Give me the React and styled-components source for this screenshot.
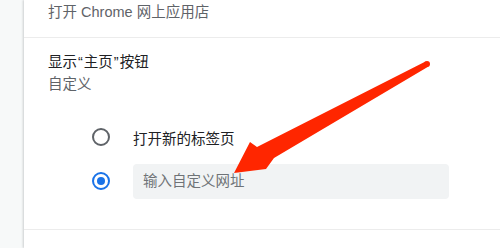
import React from "react";
import styled, { createGlobalStyle } from "styled-components";

const GlobalStyle = createGlobalStyle`
  html, body {
    margin: 0;
    padding: 0;
    background: #f7f9f9;
  }
  body {
    font-family: "Liberation Sans", "Noto Sans CJK SC", sans-serif;
    -webkit-font-smoothing: antialiased;
  }
`;

const Page = styled.div`
  position: relative;
  display: flex;
  width: 500px;
  height: 248px;
  overflow: hidden;
`;

const Side = styled.div`
  width: 24px;
  flex-shrink: 0;
  background: #f7f9f9;
`;

const Card = styled.div`
  flex: 1;
  background: #ffffff;
  box-shadow: -1px 0 2px rgba(60, 64, 67, 0.22);
  display: flex;
  flex-direction: column;
`;

const LinkRow = styled.div`
  height: 38px;
  box-sizing: border-box;
  border-bottom: 1px solid #ececec;
  padding-left: 24px;
  font-size: 14.5px;
  line-height: 24px;
  color: #5f6368;
`;

const Section = styled.div`
  padding: 14px 0 26px 24px;
  border-bottom: 1px solid #ececec;
`;

const Title = styled.div`
  font-size: 14.5px;
  line-height: 20px;
  color: #202124;
`;

const Quote = styled.span`
  margin: 0 1px;
`;

const Subtitle = styled.div`
  margin-top: 2px;
  font-size: 14.5px;
  line-height: 20px;
  color: #5f6368;
`;

const RadioGroup = styled.div`
  margin-top: 21px;
  padding-left: 44px;
  display: flex;
  flex-direction: column;
`;

const RadioRow = styled.label`
  height: 44px;
  display: flex;
  align-items: center;
  gap: 23px;
  font-size: 14.5px;
  color: #202124;
`;

const Radio = styled.span`
  width: 18px;
  height: 18px;
  box-sizing: border-box;
  border-radius: 50%;
  border: 2px solid ${(p) => (p.checked ? "#1a73e8" : "#5f6368")};
  display: flex;
  align-items: center;
  justify-content: center;
  flex-shrink: 0;
  &::after {
    content: "";
    width: 8px;
    height: 8px;
    border-radius: 50%;
    background: ${(p) => (p.checked ? "#1a73e8" : "transparent")};
  }
`;

const UrlInput = styled.input`
  width: 316px;
  height: 35px;
  box-sizing: border-box;
  border: none;
  border-radius: 4px;
  background: #f1f3f4;
  padding: 0 10px;
  font-family: inherit;
  font-size: 14.5px;
  color: #202124;
  outline: none;
  &::placeholder {
    color: #6f7377;
  }
`;

const Overlay = styled.svg`
  position: absolute;
  left: 0;
  top: 0;
  pointer-events: none;
`;

function Arrow() {
  return (
    <Overlay width="500" height="248" viewBox="0 0 500 248">
      <path
        d="M425.5 61.5 L257 147 L250 142 L234 173 L266 169 L274 158 L428.5 66.5 Z"
        fill="#ff2600"
      />
      <circle cx="427" cy="64" r="3" fill="#ff2600" />
    </Overlay>
  );
}

export default function App() {
  return (
    <>
      <GlobalStyle />
      <Page>
        <Side />
        <Card>
          <LinkRow>打开 Chrome 网上应用店</LinkRow>
          <Section>
            <Title>
              显示<Quote>“</Quote>主页<Quote>”</Quote>按钮
            </Title>
            <Subtitle>自定义</Subtitle>
            <RadioGroup>
              <RadioRow>
                <Radio />
                打开新的标签页
              </RadioRow>
              <RadioRow>
                <Radio checked />
                <UrlInput placeholder="输入自定义网址" />
              </RadioRow>
            </RadioGroup>
          </Section>
        </Card>
        <Arrow />
      </Page>
    </>
  );
}
